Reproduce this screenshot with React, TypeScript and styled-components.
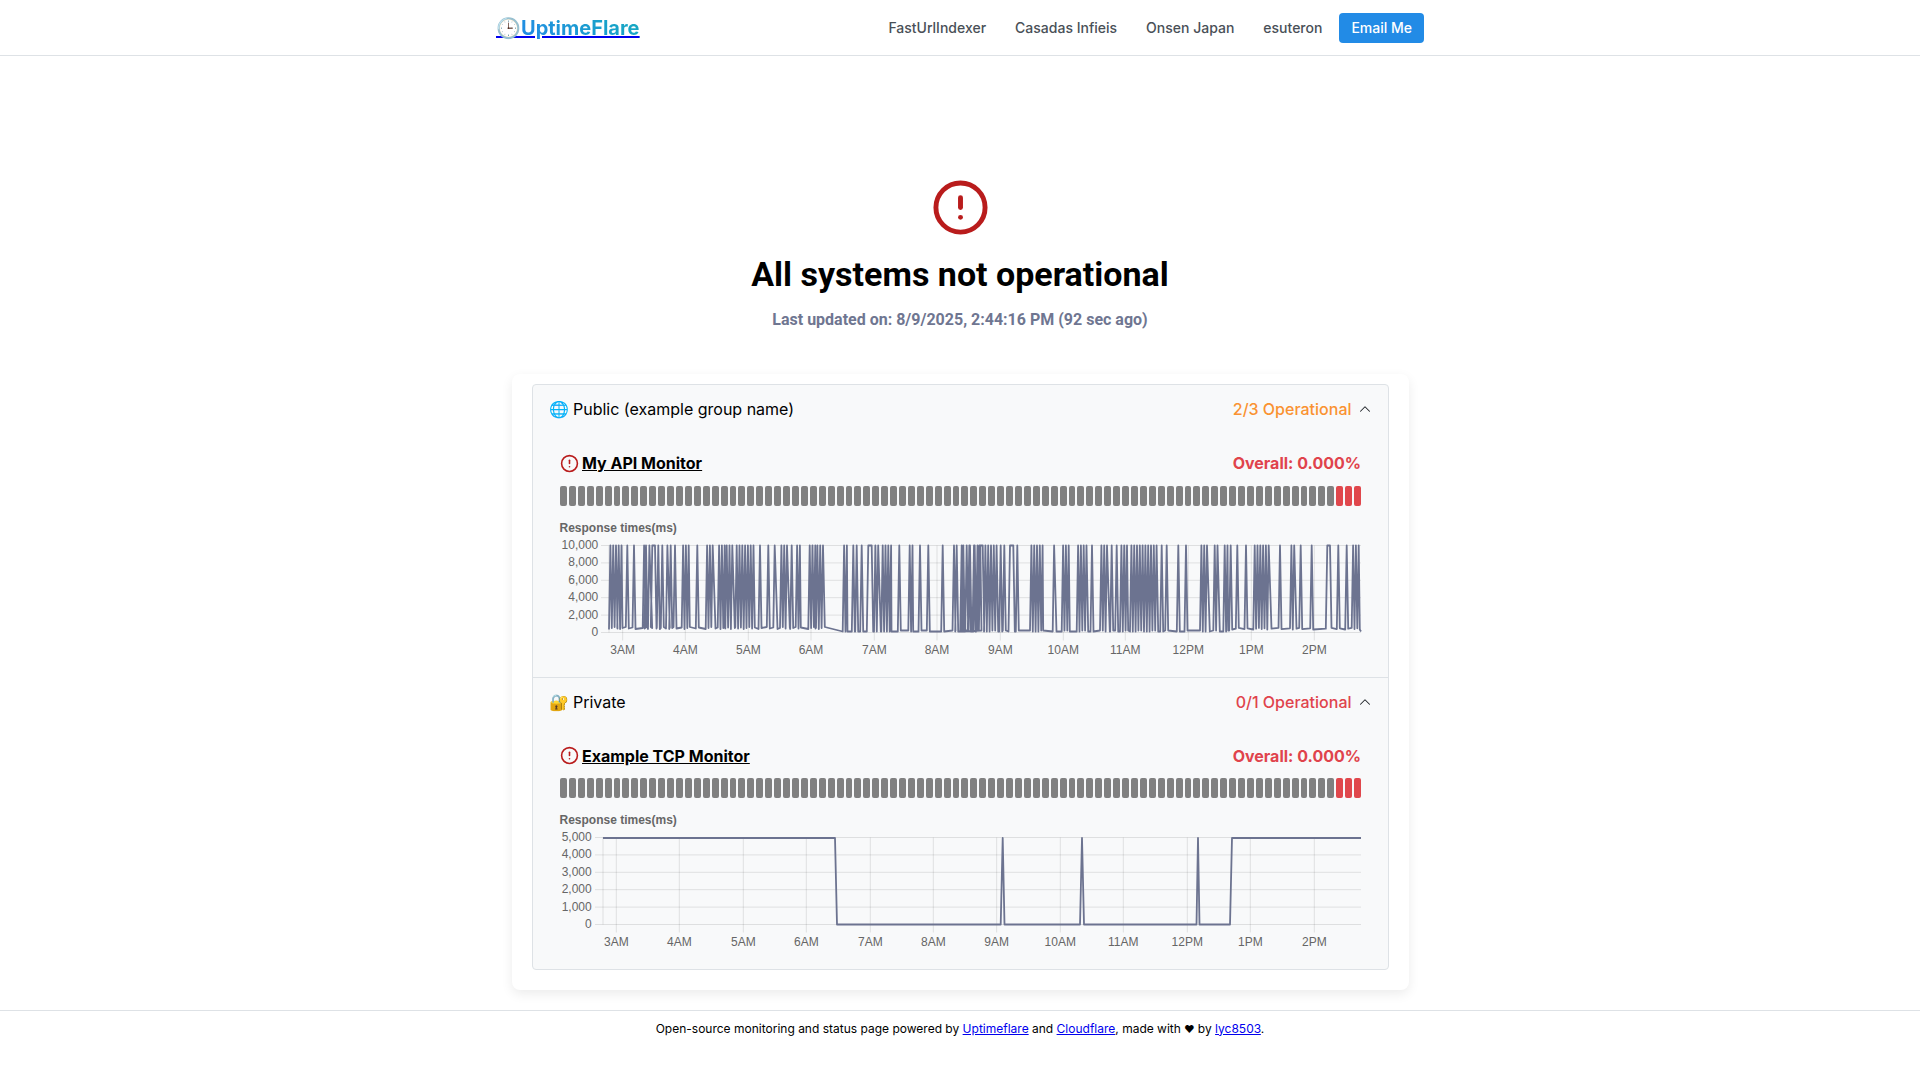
import React from 'react';
import styled, { createGlobalStyle } from 'styled-components';
import { ChevronUp, CircleAlert } from 'lucide-react';

const GlobalStyle = createGlobalStyle`
  html, body {
    margin: 0;
    padding: 0;
    background: #ffffff;
    font-family: Inter, "Liberation Sans", sans-serif;
    color: #000000;
  }
  * {
    box-sizing: border-box;
  }
`;

const Header = styled.header`
  height: 56px;
  border-bottom: 1px solid #dee2e6;
`;

const HeaderInner = styled.div`
  width: 960px;
  height: 100%;
  margin: 0 auto;
  padding: 0 16px;
  display: flex;
  align-items: center;
  justify-content: space-between;
`;

const Logo = styled.a`
  display: flex;
  align-items: center;
  color: #0000ee;
  font-size: 20px;
  line-height: 24px;
  text-decoration: underline;
`;

const LogoClock = styled.span`
  font-size: 20px;
  line-height: 24px;
`;

const LogoText = styled.span`
  background: linear-gradient(45deg, #228be6, #15aabf);
  -webkit-background-clip: text;
  background-clip: text;
  color: transparent;
  font-weight: 700;
`;

const Nav = styled.nav`
  display: flex;
  align-items: center;
  gap: 5px;
`;

const NavLink = styled.a`
  padding: 8px 12px;
  color: #495057;
  font-size: 14px;
  font-weight: 500;
  line-height: 14px;
`;

const EmailButton = styled.button`
  height: 30px;
  padding: 0 12px;
  border: 0;
  border-radius: 4px;
  background: #228be6;
  color: #ffffff;
  font-family: inherit;
  font-size: 14px;
  font-weight: 500;
`;

const Hero = styled.section`
  padding-top: 121.5px;
  display: flex;
  flex-direction: column;
  align-items: center;
  font-family: Roboto, "Liberation Sans", sans-serif;
  color: #b91c1c;
`;

const Title = styled.h1`
  margin: 15.5px 0 0;
  color: #000000;
  font-size: 34px;
  font-weight: 700;
  line-height: 44px;
`;

const Updated = styled.div`
  margin-top: 14px;
  color: #6f7691;
  font-size: 16px;
  font-weight: 700;
  line-height: 20px;
`;

const Card = styled.main`
  width: 897px;
  margin: 44.4px auto 0;
  padding: 10px 20px 19.5px;
  border-radius: 8px;
  background: #ffffff;
  box-shadow: 0 4px 12px rgba(0, 0, 0, 0.08);
`;

const Accordion = styled.div`
  border: 1px solid #dee2e6;
  border-radius: 4px;
  background: #f8f9fa;
`;

const Group = styled.section`
  & + & {
    border-top: 1px solid #dee2e6;
  }
`;

const GroupHeader = styled.div`
  height: 48px;
  padding: 0 14px 0 16px;
  display: flex;
  align-items: center;
  justify-content: space-between;
  font-size: 16px;
`;

const GroupStatus = styled.div<{ $tone: 'orange' | 'red' }>`
  display: flex;
  align-items: center;
  gap: 4px;
  font-weight: 500;
  color: ${(p) => (p.$tone === 'orange' ? '#fa9231' : '#e0434c')};

  svg {
    color: #212529;
  }
`;

const Monitor = styled.div`
  padding: 17.4px 26.5px 19.2px 27.5px;
`;

const MonitorRow = styled.div`
  height: 25px;
  display: flex;
  align-items: center;
  justify-content: space-between;
  font-size: 16px;
  font-weight: 700;
`;

const MonitorName = styled.a`
  display: flex;
  align-items: center;
  gap: 3px;
  color: #b91c1c;
  text-decoration: none;
`;

const MonitorLabel = styled.span`
  color: #000000;
  text-decoration: underline;
`;

const Overall = styled.div`
  color: #e0434c;
`;

const Bars = styled.div`
  margin-top: 10px;
  height: 20px;
  display: grid;
  grid-template-columns: repeat(90, 1fr);
  gap: 2px;
`;

const Bar = styled.div<{ $down: boolean }>`
  border-radius: 2px;
  background: ${(p) => (p.$down ? '#e0474c' : '#808080')};
`;

const ChartSvg = styled.svg`
  display: block;
  margin-top: 11.8px;
  overflow: visible;
  font-family: "Liberation Sans", Arial, sans-serif;
  font-size: 12px;
  fill: #666666;
`;

const Footer = styled.footer`
  margin-top: 20px;
  padding: 9px 0 32px;
  border-top: 1px solid #dee2e6;
  text-align: center;
  font-size: 12px;
  line-height: 18px;
`;

const Heart = styled.span`
  font-size: 10px;
`;

const GRID = 'rgba(0, 0, 0, 0.1)';
const LINE = '#6c7390';
const TOP = 27.5;
const ROW = 17.4;
const BOTTOM = TOP + ROW * 5;
const RIGHT = 801;

type Seg = number | [number, number] | [number, number, 'p'];

// spikes read off the reference, in crop coordinates of the two halves of the chart
const leftHalf: Seg[] = [
  [207, 228], [232, 243], 262, 282, [308, 314], 318, [324, 332], [337, 345, 'p'], 355, 367, [378, 385], 392, 405,
  [425, 445], 472, [497, 522], [533, 550], [556, 580], [586, 640], 660, 685, [700, 708], [720, 745], 755, [767, 778],
  [805, 822], [828, 850], [908, 918], 940, 950, 965, [985, 995, 'p'], [1002, 1018], [1024, 1050], 1078, [1105, 1115],
  1140, 1165, 1208, 1242, 1250, 1270, 1288, [1300, 1320],
];
const rightHalf: Seg[] = [
  5, 20, 30, 42, [58, 68, 'p'], [72, 110], 122, 133, [150, 160, 'p'], 172, [210, 245], [278, 285], [305, 325], [350, 380],
  396, [420, 445], 455, 470, [480, 500], [510, 590], 605, 620, 655, 678, [720, 745], [760, 775], [790, 800], 812, 832, 858,
  [880, 930], 960, [990, 1005], 1022, 1055, [1102, 1110, 'p'], 1135, 1160, [1175, 1195],
];

const lowAt = (x: number, i: number) => {
  const jitter = (i * 7) % 5;
  if (x < 265) return BOTTOM - 3.5 - jitter * 0.5;
  if (x < 333) return BOTTOM - 1;
  if (x < 670) return BOTTOM - 1 - (jitter % 2);
  return BOTTOM - 3 - jitter * 0.4;
};

const buildSpikyPath = () => {
  const segs: [number, Seg][] = [
    ...leftHalf.map((s) => [-20, s] as [number, Seg]),
    ...rightHalf.map((s) => [400, s] as [number, Seg]),
  ];
  let d = `M49 ${BOTTOM - 3}`;
  let n = 0;
  const low = (x: number) => `L${x.toFixed(1)} ${lowAt(x, n++).toFixed(1)}`;
  const top = (x: number) => `L${x.toFixed(1)} ${TOP}`;
  segs.forEach(([off, seg]) => {
    if (typeof seg === 'number') {
      const x = off + seg / 3;
      d += low(x - 1.5) + top(x) + low(x + 1.5);
    } else if (seg.length === 3) {
      const a = off + seg[0] / 3;
      const b = off + seg[1] / 3;
      d += low(a - 1.5) + top(a) + top(b) + low(b + 1.5);
    } else {
      const a = off + seg[0] / 3;
      const b = off + seg[1] / 3;
      for (let x = a; x <= b; x += 2.8) {
        d += low(x) + top(x + 1.4);
      }
      d += low(b + 1.5);
    }
  });
  d += `L${RIGHT} ${BOTTOM - 1}`;
  return d;
};

const stepPath = () => {
  const y5 = TOP + 0.5;
  const y0 = BOTTOM;
  const pts: [number, number][] = [
    [43, y5], [275, y5], [277, y0], [440.7, y0], [442.7, y5], [444.5, y0], [520, y0], [522, y5], [524, y0],
    [636.5, y0], [638, y5], [639.5, y0], [670, y0], [672, y5], [RIGHT, y5],
  ];
  return pts.map(([x, y], i) => `${i ? 'L' : 'M'}${x} ${y}`).join('');
};

const HOURS = ['3AM', '4AM', '5AM', '6AM', '7AM', '8AM', '9AM', '10AM', '11AM', '12PM', '1PM', '2PM'];

type ChartProps = {
  axisLeft: number;
  labelRight: number;
  yLabels: string[];
  ticks: number[];
  path: string;
  lineWidth: number;
};

const ResponseChart: React.FC<ChartProps> = ({ axisLeft, labelRight, yLabels, ticks, path, lineWidth }) => (
  <ChartSvg width={800} height={140} viewBox="0 0 800 140">
    <text x={-0.5} y={13.5} fontWeight={700}>
      Response times(ms)
    </text>
    {yLabels.map((label, i) => (
      <g key={label}>
        <line x1={axisLeft - 8} x2={RIGHT} y1={TOP + ROW * i} y2={TOP + ROW * i} stroke={GRID} />
        <text x={labelRight} y={TOP + ROW * i + 3.5} textAnchor="end">
          {label}
        </text>
      </g>
    ))}
    <line x1={axisLeft} x2={axisLeft} y1={TOP} y2={BOTTOM} stroke={GRID} />
    {ticks.map((x, i) => (
      <g key={HOURS[i]}>
        <line x1={x} x2={x} y1={TOP} y2={BOTTOM + 8} stroke={GRID} />
        <text x={x} y={BOTTOM + 21} textAnchor="middle">
          {HOURS[i]}
        </text>
      </g>
    ))}
    <path d={path} fill="none" stroke={LINE} strokeWidth={lineWidth} strokeLinejoin="round" />
  </ChartSvg>
);

const firstTicks = [62.7, 125.3, 188.3, 251, 314.3, 377, 440.3, 503.3, 565.3, 628.3, 691.3, 754.3];
const secondTicks = [56.3, 119.3, 183.3, 246.3, 310.3, 373.3, 436.7, 500.3, 563.3, 627.3, 690.3, 754.3];

const bars = Array.from({ length: 90 }, (_, i) => i >= 87);

const MonitorPanel: React.FC<{ name: string; chart: ChartProps }> = ({ name, chart }) => (
  <Monitor>
    <MonitorRow>
      <MonitorName href="#">
        <CircleAlert size={19} strokeWidth={2} />
        <MonitorLabel>{name}</MonitorLabel>
      </MonitorName>
      <Overall>Overall: 0.000%</Overall>
    </MonitorRow>
    <Bars>
      {bars.map((down, i) => (
        <Bar key={i} $down={down} />
      ))}
    </Bars>
    <ResponseChart {...chart} />
  </Monitor>
);

export default function App() {
  return (
    <>
      <GlobalStyle />
      <Header>
        <HeaderInner>
          <Logo href="#">
            <LogoClock>🕒</LogoClock>
            <LogoText>UptimeFlare</LogoText>
          </Logo>
          <Nav>
            <NavLink>FastUrlIndexer</NavLink>
            <NavLink>Casadas Infieis</NavLink>
            <NavLink>Onsen Japan</NavLink>
            <NavLink>esuteron</NavLink>
            <EmailButton>Email Me</EmailButton>
          </Nav>
        </HeaderInner>
      </Header>
      <Hero>
        <CircleAlert size={59} strokeWidth={2} />
        <Title>All systems not operational</Title>
        <Updated>Last updated on: 8/9/2025, 2:44:16 PM (92 sec ago)</Updated>
      </Hero>
      <Card>
        <Accordion>
          <Group>
            <GroupHeader>
              <div>🌐 Public (example group name)</div>
              <GroupStatus $tone="orange">
                2/3 Operational <ChevronUp size={18} strokeWidth={1.4} />
              </GroupStatus>
            </GroupHeader>
            <MonitorPanel
              name="My API Monitor"
              chart={{
                axisLeft: 49,
                labelRight: 38.3,
                yLabels: ['10,000', '8,000', '6,000', '4,000', '2,000', '0'],
                ticks: firstTicks,
                path: buildSpikyPath(),
                lineWidth: 1.8,
              }}
            />
          </Group>
          <Group>
            <GroupHeader>
              <div>🔐 Private</div>
              <GroupStatus $tone="red">
                0/1 Operational <ChevronUp size={18} strokeWidth={1.4} />
              </GroupStatus>
            </GroupHeader>
            <MonitorPanel
              name="Example TCP Monitor"
              chart={{
                axisLeft: 43,
                labelRight: 31.7,
                yLabels: ['5,000', '4,000', '3,000', '2,000', '1,000', '0'],
                ticks: secondTicks,
                path: stepPath(),
                lineWidth: 1.8,
              }}
            />
          </Group>
        </Accordion>
      </Card>
      <Footer>
        Open-source monitoring and status page powered by <a href="#">Uptimeflare</a> and{' '}
        <a href="#">Cloudflare</a>, made with <Heart>❤</Heart> by <a href="#">lyc8503</a>.
      </Footer>
    </>
  );
}
